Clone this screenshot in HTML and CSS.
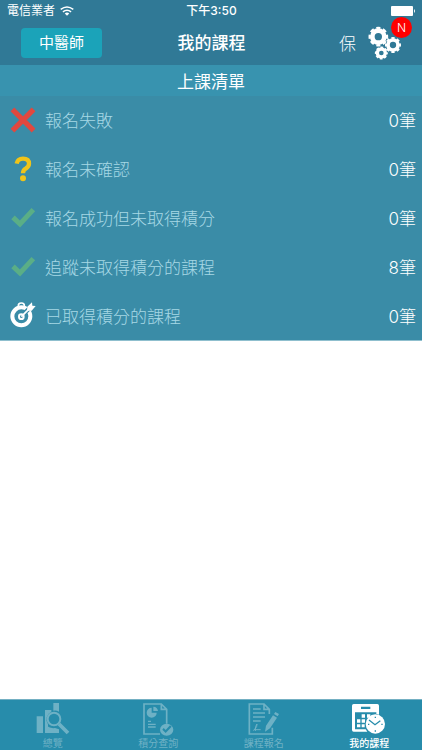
FILE: index.html
```html
<!DOCTYPE html>
<html lang="zh-Hant">
<head>
<meta charset="utf-8">
<meta name="viewport" content="width=device-width, initial-scale=1">
<title>我的課程</title>
<link rel="stylesheet" href="styles.css">
</head>
<body>
<header class="top">
  <div class="status">
    <span class="carrier">電信業者
      <svg class="wifi" viewBox="0 0 36 27" aria-hidden="true"><g fill="none" stroke="#fff" stroke-width="4"><path d="M1 9Q18-4 35 9"/><path d="M7 16Q18 7 29 16"/></g><path d="M12 20Q18 15 24 20L18 26Z" fill="#fff"/></svg>
    </span>
    <span class="clock">下午3:50</span>
    <svg class="battery" viewBox="0 0 25 10" aria-hidden="true"><rect width="22" height="10" rx="1" fill="#fff"/><path d="M23 3Q25 5 23 7Z" fill="#fff"/></svg>
  </div>
  <nav class="bar">
    <button class="role" type="button">中醫師</button>
    <h1 class="title">我的課程</h1>
    <div class="actions">
      <a class="save" href="#">保</a>
      <button class="settings" type="button" aria-label="設定">
        <svg class="gears" viewBox="0 0 102 102" aria-hidden="true">
          <g fill="none" stroke="#fff">
            <circle cx="31" cy="32" r="18" stroke-width="14"/>
            <circle cx="31" cy="32" r="26" stroke-width="7" pathLength="80" stroke-dasharray="6 4" stroke-dashoffset="3"/>
            <circle cx="75" cy="57" r="15" stroke-width="11"/>
            <circle cx="75" cy="57" r="21" stroke-width="6" pathLength="80" stroke-dasharray="6 4" stroke-dashoffset="3"/>
            <circle cx="40" cy="81" r="12" stroke-width="10"/>
            <circle cx="40" cy="81" r="17" stroke-width="5" pathLength="80" stroke-dasharray="6 4" stroke-dashoffset="3"/>
          </g>
        </svg>
        <span class="badge">N</span>
      </button>
    </div>
  </nav>
</header>
<main class="content">
  <h2 class="section">上課清單</h2>
  <ul class="list">
    <li><a class="row" href="#">
      <svg class="icon" viewBox="0 0 78 78" aria-hidden="true"><path d="M13 13L65 65M65 13L13 65" stroke="#e0483f" stroke-width="16" stroke-linecap="square"/></svg>
      <span class="label">報名失敗</span><span class="count">0筆</span></a></li>
    <li><a class="row" href="#">
      <svg class="icon" viewBox="0 0 78 78" aria-hidden="true"><path d="M20 23Q23 8 39 8Q57 8 57 23Q57 31 48 37Q39 42 39 52" fill="none" stroke="#f0c419" stroke-width="13"/><circle cx="39" cy="67" r="9" fill="#f0c419"/></svg>
      <span class="label">報名未確認</span><span class="count">0筆</span></a></li>
    <li><a class="row" href="#">
      <svg class="icon" viewBox="0 0 78 78" aria-hidden="true"><path d="M9 37L30 57L70 14" fill="none" stroke="#5aae86" stroke-width="15"/></svg>
      <span class="label">報名成功但未取得積分</span><span class="count">0筆</span></a></li>
    <li><a class="row" href="#">
      <svg class="icon" viewBox="0 0 78 78" aria-hidden="true"><path d="M9 37L30 57L70 14" fill="none" stroke="#5aae86" stroke-width="15"/></svg>
      <span class="label">追蹤未取得積分的課程</span><span class="count">8筆</span></a></li>
    <li><a class="row" href="#">
      <svg class="icon" viewBox="0 0 78 78" aria-hidden="true"><g fill="none" stroke="#fff"><circle cx="34" cy="43" r="27" stroke-width="12"/><path d="M25 13Q24 3 34 3Q44 3 43 13" stroke-width="5"/><path d="M34 43L62 15" stroke="#3a8ca7" stroke-width="13"/><circle cx="34" cy="44" r="7" stroke-width="6"/><path d="M34 44L65 13" stroke-width="5"/></g><path d="M51 26L52 14L66 1L67 11L77 12L65 26Z" fill="#fff"/></svg>
      <span class="label">已取得積分的課程</span><span class="count">0筆</span></a></li>
  </ul>
</main>
<nav class="tabs">
  <a class="tab" href="#">
    <svg class="tab-icon" viewBox="105 36 105 102" aria-hidden="true">
      <path fill="currentColor" d="M110 79H129V129H110ZM135 60H154V65A26 26 0 0 0 144 103V129H135ZM160 39H177V65Q169 60 160 62ZM141 108Q151 116 165 114L177 118V129H141Z"/>
      <circle cx="162" cy="87" r="19" fill="none" stroke="currentColor" stroke-width="6"/>
      <path d="M177 102L204 129" stroke="currentColor" stroke-width="11"/>
    </svg>總覽</a>
  <a class="tab" href="#">
    <svg class="tab-icon" viewBox="423 36 105 102" aria-hidden="true">
      <path d="M480 132H432V42H484L500 58V101M484 42V58H500" fill="none" stroke="currentColor" stroke-width="5"/>
      <path d="M455 53V68H470A15 15 0 1 1 455 53ZM460 50A15 15 0 0 1 474 63H460Z" fill="currentColor"/>
      <path d="M444 94H453M444 103H467M444 111H467" stroke="currentColor" stroke-width="4"/>
      <path fill="currentColor" fill-rule="evenodd" d="M520 119A20 18 0 1 1 480 119A20 18 0 1 1 520 119ZM487 119L497 129L515 110L510 106L497 120L491 114Z"/>
    </svg>積分查詢</a>
  <a class="tab" href="#">
    <svg class="tab-icon" viewBox="106 36 105 102" aria-hidden="true">
      <path d="M176 72V58L160 42H116V132H185V113M160 42V58H176" fill="none" stroke="currentColor" stroke-width="5"/>
      <path d="M127 57H150M127 69H163M127 81H163M127 93H150" stroke="currentColor" stroke-width="4"/>
      <path d="M128 122Q142 109 139 102Q133 107 134 123M130 119H150" fill="none" stroke="currentColor" stroke-width="3"/>
      <path fill="currentColor" d="M190 72L194 66L205 72L201 79ZM187 76L199 83L178 115L163 125L166 107Z"/>
    </svg>課程報名</a>
  <a class="tab active" href="#" aria-current="page">
    <svg class="tab-icon" viewBox="423 36 105 102" aria-hidden="true">
      <path fill="currentColor" fill-rule="evenodd" d="M428 42H499Q504 42 504 47V74L496 72V67H432V118H464L469 125H428Q423 125 423 120V47Q423 42 428 42ZM450 50V57H478V50Z"/>
      <path fill="currentColor" d="M452 73H462V83H452ZM468 73H478V80L470 83H468ZM438 88H448V98H438ZM452 88H462V98H452ZM438 103H448V112H438ZM452 103H461V112H452Z"/>
      <circle cx="493" cy="102" r="29" fill="currentColor"/>
      <path class="cut" d="M474 90L492 104L508 92M493 80V84M493 121V125M471 103H475M511 103H515" fill="none" stroke-width="4"/>
    </svg>我的課程</a>
</nav>
</body>
</html>
```
FILE: styles.css
```css
* { box-sizing: border-box; }
body {
  margin: 0;
  min-height: 100vh;
  display: flex;
  flex-direction: column;
  background: #fff;
  color: #fff;
  font-family: Inter, "Noto Sans CJK TC", sans-serif;
  font-size: 17px;
}
a { color: inherit; text-decoration: none; }
button { font: inherit; color: inherit; border: 0; padding: 0; }
h1, h2, ul { margin: 0; padding: 0; }

.top { background: #307996; }
.status {
  height: 22px;
  padding: 0 6px 0 7px;
  display: grid;
  grid-template-columns: 1fr auto 1fr;
  align-items: center;
  font-size: 12px;
  line-height: 20px;
}
.carrier { display: flex; align-items: center; gap: 5px; }
.wifi { width: 14px; height: 10px; }
.clock { font-weight: 500; }
.battery { width: 25px; height: 10px; justify-self: end; }

.bar {
  height: 43px;
  padding: 0 20px 2px 21px;
  display: grid;
  grid-template-columns: 1fr auto 1fr;
  align-items: center;
}
.role {
  width: 81px;
  height: 30px;
  border-radius: 4px;
  background: #1ba3b9;
  font-size: 15px;
  line-height: 28px;
}
.title { font-size: 17px; font-weight: 500; line-height: 24px; }
.actions { display: flex; justify-content: flex-end; align-items: center; gap: 12px; }
.save { font-weight: 300; }
.settings { position: relative; background: none; width: 34px; height: 34px; }
.gears { display: block; width: 34px; height: 34px; }
.badge {
  position: absolute;
  top: -9px;
  right: -10px;
  width: 21px;
  height: 21px;
  border-radius: 50%;
  background: #fe0000;
  font-size: 12px;
  font-weight: 300;
  line-height: 21px;
  text-align: center;
}

.content { flex: 1; }
.section {
  height: 31px;
  padding-top: 2px;
  background: #3893af;
  font-size: 17px;
  font-weight: 400;
  line-height: 30px;
  text-align: center;
}
.list { list-style: none; background: #3a8ca7; border-bottom: 1px solid #8fbfce; }
.row {
  height: 49px;
  padding: 0 6px 2px 10px;
  display: flex;
  align-items: center;
}
.list li:last-child .row { height: 48px; }
.icon { width: 26px; height: 26px; margin-right: 9px; }
.label { flex: 1; color: #a7d8e5; font-weight: 300; }
.count { font-weight: 300; }

.tabs {
  height: 51px;
  border-top: 1px solid #74b0c3;
  background: #278cab;
  display: grid;
  grid-template-columns: repeat(4, 1fr);
}
.tab {
  padding-top: 2px;
  display: flex;
  flex-direction: column;
  align-items: center;
  color: #6eb1c5;
  font-size: 10px;
  line-height: 14px;
}
.tab-icon { width: 35px; height: 34px; }
.active { color: #fff; font-weight: 500; }
.cut { stroke: #278cab; }
```
